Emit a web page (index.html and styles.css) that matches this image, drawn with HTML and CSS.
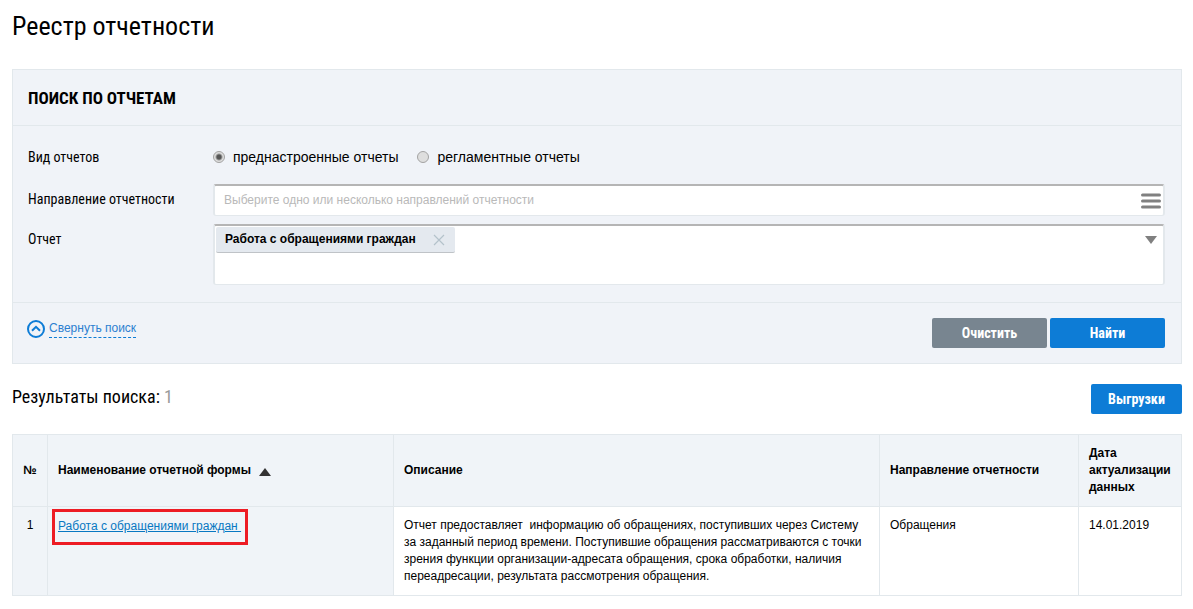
FILE: index.html
```html
<!DOCTYPE html>
<html lang="ru">
<head>
  <meta charset="UTF-8" />
  <meta name="viewport" content="width=device-width, initial-scale=1.0"/>
  <title>Реестр отчетности</title>
  <link rel="stylesheet" href="styles.css">
</head>
<body>
  <h1>Реестр отчетности</h1>

  <form class="search-panel">
    <h2>Поиск по отчетам</h2>

    <div class="search-body">
      <div class="form-row kind-row" role="radiogroup" aria-labelledby="kindLabel">
        <span class="row-label" id="kindLabel">Вид отчетов</span>
        <div class="radio-group">
          <label><input type="radio" name="kind" checked>преднастроенные отчеты</label>
          <label><input type="radio" name="kind">регламентные отчеты</label>
        </div>
      </div>

      <div class="form-row">
        <label class="row-label" for="direction">Направление отчетности</label>
        <div class="field">
          <input type="text" id="direction" placeholder="Выберите одно или несколько направлений отчетности">
          <button type="button" class="icon-btn" aria-label="Выбрать из списка">
            <svg width="20" height="16" viewBox="0 0 20 16"><path d="M1.5 2h17M1.5 8h17M1.5 14h17" stroke="#808080" stroke-width="3" stroke-linecap="round"/></svg>
          </button>
        </div>
      </div>

      <div class="form-row">
        <label class="row-label" for="report">Отчет</label>
        <div class="field field-tags">
          <span class="tag">Работа с обращениями граждан
            <button type="button" aria-label="Удалить">
              <svg width="12" height="12" viewBox="0 0 12 12"><path d="M1 1l10 10M11 1L1 11" stroke="#b4c2cb" stroke-width="1.2"/></svg>
            </button>
          </span>
          <input type="text" id="report">
          <button type="button" class="icon-btn" aria-label="Открыть список">
            <svg width="12" height="8" viewBox="0 0 12 8"><path d="M0 0h12L6 8z" fill="#808080"/></svg>
          </button>
        </div>
      </div>
    </div>

    <div class="search-footer">
      <a href="#" class="collapse">
        <svg width="18" height="18" viewBox="0 0 18 18" fill="none" stroke="#0d7cd6" stroke-width="2"><circle cx="9" cy="9" r="8"/><path d="M5 10.8l4-4 4 4"/></svg>
        <span>Свернуть поиск</span>
      </a>
      <div class="buttons">
        <button type="reset" class="btn btn-grey">Очистить</button>
        <button type="submit" class="btn">Найти</button>
      </div>
    </div>
  </form>

  <div class="results-bar">
    <p>Результаты поиска: <span>1</span></p>
    <button type="button" class="btn btn-export">Выгрузки</button>
  </div>

  <table>
    <colgroup>
      <col class="col-num">
      <col class="col-name">
      <col>
      <col class="col-direction">
      <col class="col-date">
    </colgroup>
    <thead>
      <tr>
        <th>№</th>
        <th>Наименование отчетной формы <svg class="sort" width="12" height="8" viewBox="0 0 12 8"><path d="M0 8h12L6 0z" fill="#333"/></svg></th>
        <th>Описание</th>
        <th>Направление отчетности</th>
        <th>Дата актуализации данных</th>
      </tr>
    </thead>
    <tbody>
      <tr>
        <td>1</td>
        <td class="name-cell"><span class="mark"><a href="#">Работа с обращениями граждан&nbsp;</a></span></td>
        <td>Отчет предоставляет&nbsp; информацию об обращениях, поступивших через Систему за заданный период времени. Поступившие обращения рассматриваются с точки зрения функции организации-адресата обращения, срока обработки, наличия переадресации, результата рассмотрения обращения.</td>
        <td>Обращения</td>
        <td>14.01.2019</td>
      </tr>
    </tbody>
  </table>
</body>
</html>
```
FILE: styles.css
```css
* {
  box-sizing: border-box;
}
body {
  margin: 0;
  padding: 10px 11px 12px 12px;
  background-color: #fff;
  color: #000;
  font-family: "Liberation Sans", Arial, sans-serif;
  font-size: 12px;
  line-height: 17px;
}
h1, h2, .row-label, .btn, .results-bar {
  font-family: "Roboto Condensed", "Liberation Sans Narrow", "Liberation Sans", sans-serif;
}
h1 {
  margin: 0 0 27px;
  font-size: 26px;
  line-height: 32px;
  font-weight: normal;
}
.search-panel {
  border: 1px solid #e2e8ec;
  background-color: #f0f3f8;
}
h2 {
  margin: 0;
  padding: 16px 15px 15px;
  border-bottom: 1px solid #e2e8ec;
  font-size: 17px;
  line-height: 24px;
  font-weight: bold;
  text-transform: uppercase;
}
.search-body {
  display: flex;
  flex-direction: column;
  gap: 8px;
  padding: 16px 16px 17px 15px;
}
.form-row {
  display: flex;
}
.kind-row {
  margin-bottom: 4px;
}
.row-label {
  flex: 0 0 185px;
  font-size: 14px;
  line-height: 30px;
}
.radio-group {
  display: flex;
  gap: 19px;
  font-size: 14px;
  line-height: 24px;
}
.radio-group label {
  display: flex;
  align-items: center;
}
.radio-group input {
  appearance: none;
  width: 12px;
  height: 12px;
  margin: 0 8px 0 0;
  border: 1px solid #a3a3a3;
  border-radius: 50%;
  background-color: #dedede;
}
.radio-group input:checked {
  background-image: radial-gradient(circle, #555 2px, transparent 4px);
}
.field {
  display: flex;
  align-items: center;
  flex: 1;
  height: 32px;
  border: 1px solid #e3e8ec;
  border-top: 2px solid #b5b5b5;
  border-left-width: 2px;
  border-right-width: 2px;
  border-radius: 3px;
  background-color: #fff;
}
.field-tags {
  align-items: flex-start;
  height: 61px;
}
.field input {
  flex: 1;
  min-width: 0;
  padding: 0 9px;
  border: none;
  outline: none;
  background: none;
  font: inherit;
}
.field input::placeholder {
  color: #b9b9b9;
}
.field button {
  display: flex;
  padding: 0;
  border: none;
  background: none;
  cursor: pointer;
}
.field .icon-btn {
  justify-content: center;
  width: 24px;
}
.field-tags .icon-btn {
  margin-top: 10px;
}
.tag {
  display: flex;
  align-items: center;
  gap: 17px;
  height: 26px;
  margin: 1px;
  padding: 0 10px 0 9px;
  border-bottom: 1px solid #bfc3c7;
  border-radius: 2px;
  background-color: #e4e9ef;
  font-weight: bold;
}
.search-footer {
  display: flex;
  justify-content: space-between;
  padding: 15px 16px 15px 14px;
  border-top: 1px solid #e2e8ec;
}
.collapse {
  display: flex;
  align-items: center;
  gap: 4px;
  height: 22px;
  color: #2c7fd0;
  text-decoration: none;
}
.collapse span {
  padding-bottom: 1px;
  border-bottom: 1px dashed #0d7cd6;
  line-height: 16px;
}
.buttons {
  display: flex;
  gap: 3px;
}
.btn {
  width: 115px;
  height: 30px;
  padding: 0;
  border: none;
  border-radius: 2px;
  background-color: #0d7cd6;
  color: #fff;
  font-size: 14px;
  font-weight: bold;
  cursor: pointer;
}
.btn-grey {
  background-color: #788590;
}
.btn-export {
  width: 91px;
}
.results-bar {
  display: flex;
  justify-content: space-between;
  margin: 20px 0;
}
.results-bar p {
  margin: 0;
  font-size: 18px;
  line-height: 26px;
}
.results-bar span {
  color: #999;
}
table {
  width: 100%;
  table-layout: fixed;
  border-collapse: collapse;
}
.col-num {
  width: 35px;
}
.col-name {
  width: 346px;
}
.col-direction {
  width: 199px;
}
.col-date {
  width: 103px;
}
th, td {
  padding: 10px;
  border: 1px solid #e2e8ec;
  text-align: left;
  vertical-align: top;
}
th {
  background-color: #f0f4f8;
  vertical-align: middle;
}
th:first-child, td:first-child {
  padding: 10px 0;
  text-align: center;
}
td:first-child, .name-cell {
  background-color: #f0f4f8;
}
.name-cell {
  padding: 2px 4px;
}
.sort {
  margin-left: 5px;
  vertical-align: -2px;
}
.mark {
  display: inline-block;
  padding: 6px 4px 7px 3px;
  border: 3px solid #ed1c24;
}
.mark a {
  color: #0878c2;
}
```
